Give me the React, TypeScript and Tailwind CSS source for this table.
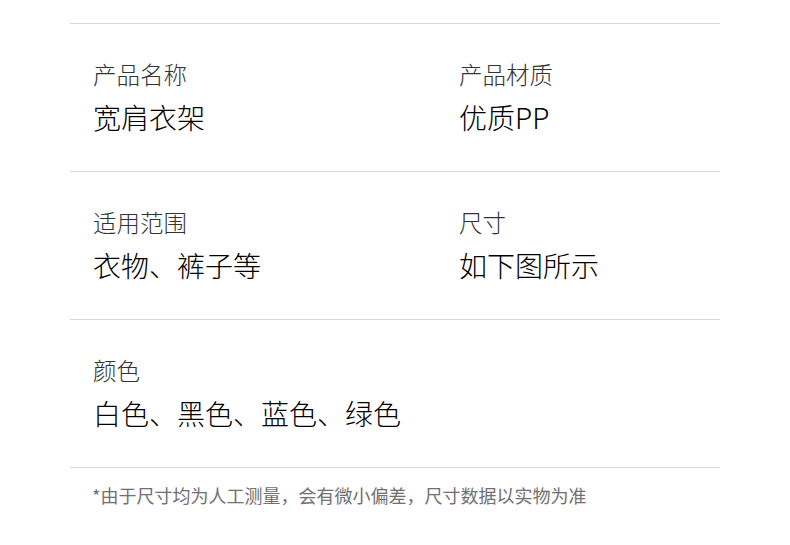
import React from "react";

const font = { fontFamily: '"Noto Sans CJK SC", "Noto Sans", sans-serif' };

function Cell({ label, value }: { label: string; value: string }) {
  return (
    <div className="flex flex-col">
      <div className="text-[23.5px] leading-[24px] font-light text-[#333333]">{label}</div>
      <div className="mt-[17px] text-[28px] leading-[28px] font-light text-[#000000]">{value}</div>
    </div>
  );
}

export default function App() {
  const rows: { label: string; value: string }[][] = [
    [
      { label: "产品名称", value: "宽肩衣架" },
      { label: "产品材质", value: "优质PP" },
    ],
    [
      { label: "适用范围", value: "衣物、裤子等" },
      { label: "尺寸", value: "如下图所示" },
    ],
    [{ label: "颜色", value: "白色、黑色、蓝色、绿色" }],
  ];
  return (
    <div className="w-[790px] h-[545px] bg-white pt-[23px]" style={font}>
      <div className="ml-[70px] w-[650px]">
        {rows.map((row, i) => (
          <div
            key={i}
            className="h-[148px] border-t border-[#d9d9d9] pt-[38px] pl-[23px] grid grid-cols-[366px_1fr]"
          >
            {row.map((c) => (
              <Cell key={c.label} label={c.label} value={c.value} />
            ))}
          </div>
        ))}
        <div className="border-t border-[#d9d9d9] pt-[18px] pl-[22px] text-[18px] leading-[18px] font-normal text-[#707070]">
          *由于尺寸均为人工测量，会有微小偏差，尺寸数据以实物为准
        </div>
      </div>
    </div>
  );
}
